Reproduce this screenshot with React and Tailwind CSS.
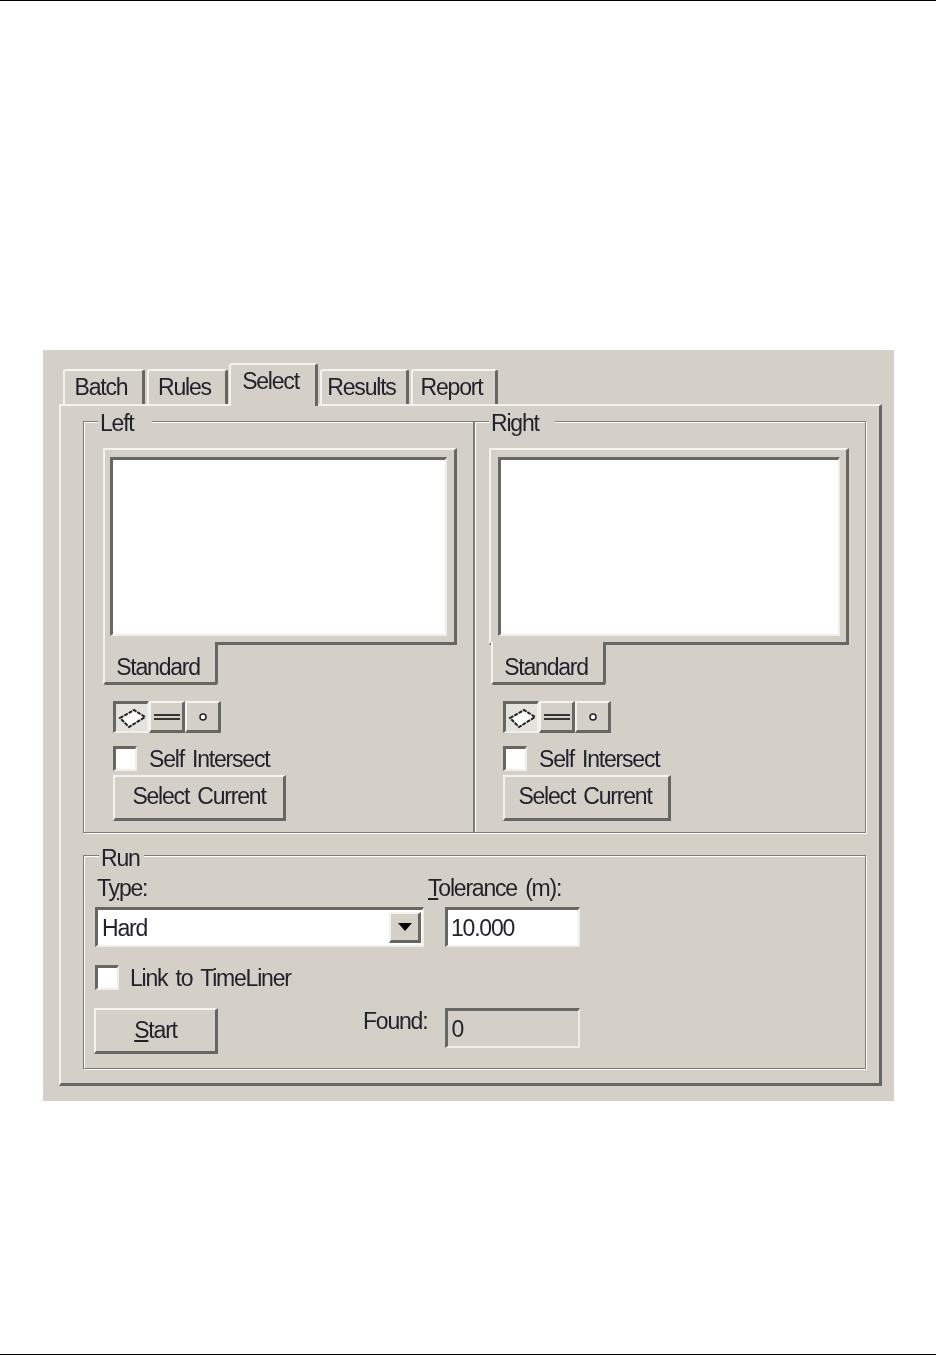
import React from 'react'

const raised = "border-t-2 border-l-2 border-r-[3px] border-b-[3px] border-t-[#f4f3f0] border-l-[#f4f3f0] border-r-[#666663] border-b-[#666663]"
const sunken = "border-t-[3px] border-l-[3px] border-r-2 border-b-2 border-t-[#666663] border-l-[#666663] border-r-[#efeeea] border-b-[#efeeea]"
const groupLine = "border border-[#7c7c78] shadow-[1px_1px_0_#fff,inset_1px_1px_0_#fff]"

const Tab = ({ label, width, active }) => (
  <div
    className={
      "flex justify-center rounded-t-[3px] border-t-2 border-l-2 border-r-[3px] border-t-[#f4f3f0] border-l-[#f4f3f0] border-r-[#666663] bg-[#d4d0c8] pr-[5px] " +
      width +
      (active ? " relative z-10 -mb-[2px] h-[43px] pt-[3px]" : " h-[35px] pt-[3px]")
    }
  >
    {label}
  </div>
)

const Legend = ({ children, left, top, pad }) => (
  <span className={"absolute bg-[#d4d0c8] pl-[2px] " + left + " " + top + " " + pad}>{children}</span>
)

const Checkbox = ({ label, gap }) => (
  <div className="flex h-[25px] items-center">
    <div className={"h-[25px] w-[24px] bg-white " + sunken} />
    <span className={gap}>{label}</span>
  </div>
)

const ShapeButtons = () => (
  <div className="flex h-[32px]">
    <div className={"flex w-[36px] items-center justify-center bg-[#e4e2dc] " + sunken}>
      <svg width="28" height="22" viewBox="0 0 28 22">
        <path d="M2 11 L16 3 L27 10 L11 20 Z" fill="#fff" stroke="#222" strokeWidth="2" strokeDasharray="4 1" />
      </svg>
    </div>
    <div className={"flex w-[36px] items-center justify-center " + raised}>
      <svg width="26" height="10" viewBox="0 0 26 10">
        <path d="M0 3 H26 M0 7 H26" stroke="#333" strokeWidth="1.8" />
      </svg>
    </div>
    <div className={"flex w-[36px] items-center justify-center " + raised}>
      <svg width="10" height="10" viewBox="0 0 10 10">
        <circle cx="5" cy="5" r="3" fill="#fff" stroke="#222" strokeWidth="1.5" />
      </svg>
    </div>
  </div>
)

const SidePanel = ({ boxWidth, listWidth, listOffset, toolOffset, tabOffset, buttonClass, labelGap }) => (
  <div>
    <div className={"h-[197px] pt-[7px] " + listOffset + " " + raised + " " + boxWidth}>
      <div className={"h-[179px] bg-white " + sunken + " " + listWidth} />
    </div>
    <div className={"relative z-10 -mt-[3px] flex h-[43px] w-[115px] justify-center rounded-b-[3px] border-l-2 border-r-[3px] border-b-[3px] border-l-[#f4f3f0] border-r-[#666663] border-b-[#666663] bg-[#d4d0c8] pt-[12px] pr-[4px] " + tabOffset}>
      Standard
    </div>
    <div className={"mt-[16px] " + toolOffset}>
      <ShapeButtons />
      <div className="mt-[13px]">
        <Checkbox label="Self Intersect" gap={labelGap} />
      </div>
      <div className={"mt-[4px] flex h-[46px] items-center justify-center pb-[3px] " + raised + " " + buttonClass}>
        Select Current
      </div>
    </div>
  </div>
)

export default function App() {
  return (
    <div className="flex h-[1355px] w-[936px] flex-col overflow-hidden bg-white font-['Liberation_Sans',Arial,sans-serif] text-[23px] leading-[26px] tracking-[-1.2px] [word-spacing:3px] text-[#22222c]">
      <div className="h-[1px] bg-black" />

      <div className="mt-[349px] ml-[43px] h-[751px] w-[851px] bg-[#d4d0c8] pt-[14px] pl-[16px] blur-[0.55px]">
        {/* Tabs */}
        <div className="ml-[4px] flex h-[40px] items-end gap-[2px]">
          <Tab label="Batch" width="w-[82px]" />
          <Tab label="Rules" width="w-[81px]" />
          <div className="-ml-[1px]">
            <Tab label="Select" width="w-[89px]" active />
          </div>
          <Tab label="Results" width="w-[89px]" />
          <Tab label="Report" width="w-[87px]" />
        </div>

        <div className={"h-[682px] w-[823px] pt-[15px] pl-[22px] " + raised}>
          <div className="flex">
            {/* Left */}
            <div className={"relative h-[412px] w-[391px] pt-[26px] pl-[19px] " + groupLine}>
              <Legend left="left-[14px]" top="-top-[12px]" pad="pr-[18px]">Left</Legend>
              <SidePanel
                boxWidth="w-[354px]"
                listWidth="w-[337px]"
                listOffset="pl-[5px]"
                toolOffset="ml-[10px]"
                tabOffset=""
                buttonClass="w-[173px]"
                labelGap="ml-[12px]"
              />
            </div>
            {/* Right */}
            <div className={"relative -ml-[1px] h-[412px] w-[393px] border-l-2 pt-[26px] pl-[14px] " + groupLine}>
              <Legend left="left-[14px]" top="-top-[12px]" pad="pr-[16px]">Right</Legend>
              <SidePanel
                boxWidth="w-[360px]"
                listWidth="w-[342px]"
                listOffset="pl-[7px]"
                toolOffset="ml-[14px]"
                tabOffset="ml-[2px]"
                buttonClass="w-[168px] pr-[3px]"
                labelGap="ml-[12px]"
              />
            </div>
          </div>

          {/* Run */}
          <div className={"relative mt-[22px] h-[214px] w-[783px] pt-[19px] pl-[11px] " + groupLine}>
            <Legend left="left-[15px]" top="-top-[11px]" pad="pr-[4px]">Run</Legend>
            <div className="flex h-[28px] pl-[2px]">
              <span className="w-[331px]">T<span className="underline">y</span>pe:</span>
              <span><span className="underline">T</span>olerance (m):</span>
            </div>
            <div className="mt-[4px] flex gap-[21px]">
              <div className={"flex h-[40px] w-[329px] items-center justify-between bg-white pr-px pl-[4px] " + sunken}>
                <span>Hard</span>
                <div className={"flex h-[31px] w-[32px] items-center justify-center bg-[#d4d0c8] " + raised}>
                  <svg width="14" height="8" viewBox="0 0 14 8"><path d="M0 0 H14 L7 8 Z" fill="#000" /></svg>
                </div>
              </div>
              <div className={"flex h-[40px] w-[135px] items-center bg-white pl-[3px] " + sunken}>10.000</div>
            </div>
            <div className="mt-[18px]">
              <Checkbox label="Link to TimeLiner" gap="ml-[11px]" />
            </div>
            <div className="mt-[18px] flex items-start">
              <div className={"-ml-[1px] flex h-[46px] w-[124px] items-center justify-center pb-[2px] " + raised}>
                <span><span className="underline">S</span>tart</span>
              </div>
              <span className="ml-[145px]">Found:</span>
              <div className={"ml-[18px] flex h-[40px] w-[135px] items-center pl-[3px] " + sunken}>0</div>
            </div>
          </div>
        </div>
      </div>

      <div className="mt-auto h-[1px] bg-black" />
    </div>
  )
}
